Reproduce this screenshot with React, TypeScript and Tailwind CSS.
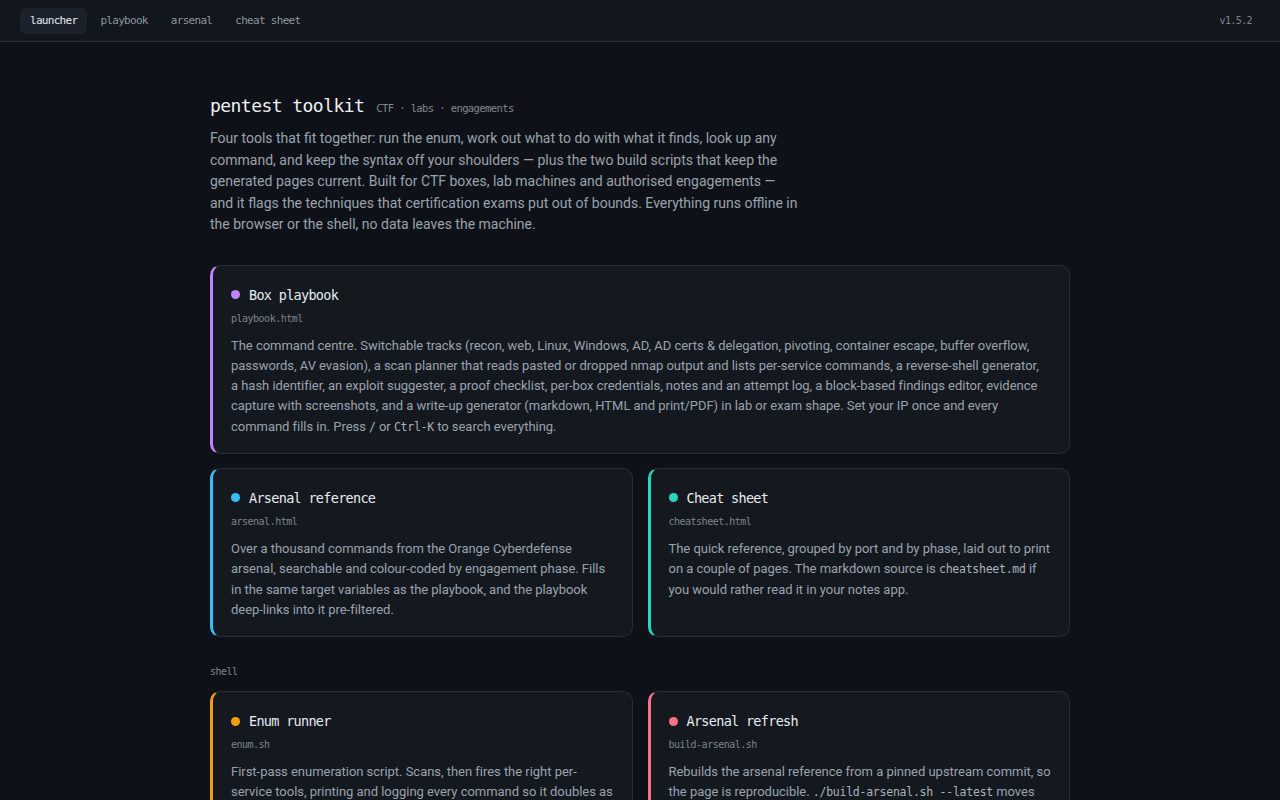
import React from 'react';

interface Tool {
  name: string;
  file: string;
  dot: string;
  edge: string;
  body: React.ReactNode;
  wide?: boolean;
}

const mono = "font-['DejaVu_Sans_Mono','Liberation_Mono',monospace]";
const sans = "font-['Roboto','Inter','Liberation_Sans',sans-serif]";

const Code = ({ children }: { children: React.ReactNode }) => (
  <code className={`${mono} text-[11.5px] leading-none tracking-[-0.25px] text-[#aab2bc]`}>{children}</code>
);

const ToolCard = ({ tool }: { tool: Tool }) => (
  <div
    className={`rounded-[10px] border border-[#262d37] border-l-[3px] ${tool.edge} bg-[#141920] pl-[18px] ${
      tool.wide ? 'pr-[22px]' : 'pr-4'
    } pt-[19px] pb-[16px]`}
  >
    <div className="flex items-center gap-[9px]">
      <span className={`h-[9px] w-[9px] rounded-full ${tool.dot}`} />
      <h2 className={`${mono} text-[13.5px] leading-[20px] tracking-[-0.7px] text-[#e8ebef]`}>{tool.name}</h2>
    </div>
    <div className={`${mono} mt-[7px] text-[10px] leading-[14px] tracking-[-0.5px] text-[#7c848f]`}>{tool.file}</div>
    <p className={`${sans} mt-[10px] text-[13px] leading-[20.3px] tracking-[-0.03px] text-[#9aa2ad]`}>{tool.body}</p>
  </div>
);

const playbook: Tool = {
  name: 'Box playbook',
  file: 'playbook.html',
  dot: 'bg-[#c084fc]',
  edge: 'border-l-[#c084fc]',
  wide: true,
  body: (
    <>
      The command centre. Switchable tracks (recon, web, Linux, Windows, AD, AD certs &amp; delegation, pivoting,
      container escape, buffer overflow, passwords, AV evasion), a scan planner that reads pasted or dropped nmap
      output and lists per-service commands, a reverse-shell generator, a hash identifier, an exploit suggester, a
      proof checklist, per-box credentials, notes and an attempt log, a block-based findings editor, evidence capture
      with screenshots, and a write-up generator (markdown, HTML and print/PDF) in lab or exam shape. Set your IP once
      and every command fills in. Press <Code>/</Code> or <Code>Ctrl-K</Code> to search everything.
    </>
  ),
};

const browserTools: Tool[] = [
  {
    name: 'Arsenal reference',
    file: 'arsenal.html',
    dot: 'bg-[#38bdf8]',
    edge: 'border-l-[#38bdf8]',
    body: (
      <>
        Over a thousand commands from the Orange Cyberdefense arsenal, searchable and colour-coded by engagement
        phase. Fills in the same target variables as the playbook, and the playbook deep-links into it pre-filtered.
      </>
    ),
  },
  {
    name: 'Cheat sheet',
    file: 'cheatsheet.html',
    dot: 'bg-[#2dd4bf]',
    edge: 'border-l-[#2dd4bf]',
    body: (
      <>
        The quick reference, grouped by port and by phase, laid out to print on a couple of pages. The markdown source
        is <Code>cheatsheet.md</Code> if you would rather read it in your notes app.
      </>
    ),
  },
];

const shellTools: Tool[] = [
  {
    name: 'Enum runner',
    file: 'enum.sh',
    dot: 'bg-[#f59e0b]',
    edge: 'border-l-[#f59e0b]',
    body: (
      <>
        First-pass enumeration script. Scans, then fires the right per-service tools, printing and logging every
        command so it doubles as a record of what was run. Output lands in a folder per box.
      </>
    ),
  },
  {
    name: 'Arsenal refresh',
    file: 'build-arsenal.sh',
    dot: 'bg-[#f87185]',
    edge: 'border-l-[#f87185]',
    body: (
      <>
        Rebuilds the arsenal reference from a pinned upstream commit, so the page is reproducible.{' '}
        <Code>./build-arsenal.sh --latest</Code> moves the pin to the newest commit and regenerates the page.
      </>
    ),
  },
];

const tabs = ['launcher', 'playbook', 'arsenal', 'cheat sheet'];

export default function App() {
  return (
    <div className="min-h-screen bg-[#0e1218]">
      <nav className="flex h-[42px] items-center justify-between border-b border-[#2a3039] bg-[#12161d] pl-5 pr-7">
        <div className="flex items-center gap-[3px]">
          {tabs.map((t, i) => (
            <a
              key={t}
              href="#"
              className={`${mono} rounded-md px-[10px] py-[5px] text-[11px] leading-[16px] tracking-[-0.7px] ${
                i === 0 ? 'bg-[#1c222b] text-[#e6e9ed]' : 'text-[#8d96a1]'
              }`}
            >
              {t}
            </a>
          ))}
        </div>
        <span className={`${mono} text-[10px] tracking-[-0.6px] text-[#7c848f]`}>v1.5.2</span>
      </nav>

      <main className="mx-auto max-w-[860px] pt-[51px] pb-16">
        <div className="flex items-baseline gap-3">
          <h1 className={`${mono} text-[18px] leading-[26px] tracking-[-0.55px] text-[#eef0f3]`}>pentest toolkit</h1>
          <span className={`${mono} text-[10.5px] tracking-[-0.6px] text-[#7f8792]`}>CTF · labs · engagements</span>
        </div>
        <p className={`${sans} mt-[9px] max-w-[590px] text-[14px] leading-[21.5px] text-[#9aa2ad]`}>
          Four tools that fit together: run the enum, work out what to do with what it finds, look up any command, and
          keep the syntax off your shoulders — plus the two build scripts that keep the generated pages current. Built
          for CTF boxes, lab machines and authorised engagements — and it flags the techniques that certification exams
          put out of bounds. Everything runs offline in the browser or the shell, no data leaves the machine.
        </p>

        <div className="mt-[29px] flex flex-col gap-[14px]">
          <ToolCard tool={playbook} />
          <div className="grid grid-cols-2 gap-[15px]">
            {browserTools.map((t) => (
              <ToolCard key={t.file} tool={t} />
            ))}
          </div>
        </div>

        <div className={`${mono} mt-[27px] mb-[11px] text-[10px] leading-[16px] tracking-[-0.5px] text-[#7c848f]`}>shell</div>
        <div className="grid grid-cols-2 gap-[15px]">
          {shellTools.map((t) => (
            <ToolCard key={t.file} tool={t} />
          ))}
        </div>
      </main>
    </div>
  );
}
